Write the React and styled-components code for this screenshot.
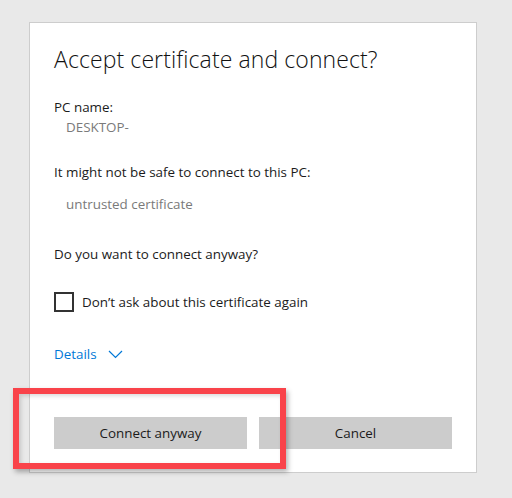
import React from "react";
import styled, { createGlobalStyle } from "styled-components";

const Global = createGlobalStyle`
  html, body { margin: 0; padding: 0; background: #e9e9e9; }
  body { font-family: "Open Sans", "Noto Sans", sans-serif; color: #1b1b1b; }
`;

const Page = styled.div`
  position: relative;
  width: 512px;
  height: 498px;
  padding: 22px 0 0 29px;
  box-sizing: border-box;
`;

const Card = styled.div`
  width: 448px;
  height: 451px;
  box-sizing: border-box;
  background: #fff;
  border: 1px solid #cdcdcd;
  padding: 20px 24px 23px 24px;
  display: flex;
  flex-direction: column;
`;

const Title = styled.h1`
  margin: 0;
  font-size: 23px;
  font-weight: 300;
  line-height: 32px;
  color: #111;
  letter-spacing: 0.1px;
`;

const Text = styled.div`
  font-size: 13.4px;
  line-height: 20px;
  margin-top: ${(p) => p.$mt || 0}px;
  color: #1b1b1b;
`;

const Muted = styled.div`
  font-size: 13.4px;
  line-height: 20px;
  margin-top: ${(p) => p.$mt || 0}px;
  padding-left: 12px;
  color: #7a7a7a;
`;

const CheckRow = styled.label`
  display: flex;
  align-items: center;
  gap: 8px;
  margin-top: 28px;
  font-size: 13.4px;
  line-height: 20px;
`;

const Box = styled.span`
  width: 20px;
  height: 20px;
  box-sizing: border-box;
  border: 2px solid #333;
  flex: none;
`;

const Details = styled.div`
  display: flex;
  align-items: center;
  gap: 11px;
  margin-top: 32px;
  font-size: 13.4px;
  line-height: 20px;
  color: #0078d7;
`;

const Buttons = styled.div`
  display: flex;
  gap: 12px;
  margin-top: auto;
`;

const Button = styled.button`
  width: 193px;
  height: 32px;
  border: none;
  background: #cccccc;
  font-family: inherit;
  font-size: 13.4px;
  color: #1b1b1b;
  padding: 0;
`;

const Highlight = styled.div`
  position: absolute;
  left: 13px;
  top: 388px;
  width: 273px;
  height: 81px;
  box-sizing: border-box;
  border: 6px solid #f9434a;
  box-shadow: 2px 3px 5px rgba(0, 0, 0, 0.3), inset 2px 2px 4px rgba(0, 0, 0, 0.15);
  pointer-events: none;
`;

export default function App() {
  return (
    <Page>
      <Global />
      <Card>
        <Title>Accept certificate and connect?</Title>
        <Text $mt={22}>PC name:</Text>
        <Muted>DESKTOP-</Muted>
        <Text $mt={25}>It might not be safe to connect to this PC:</Text>
        <Muted $mt={12}>untrusted certificate</Muted>
        <Text $mt={30}>Do you want to connect anyway?</Text>
        <CheckRow>
          <Box />
          Don’t ask about this certificate again
        </CheckRow>
        <Details>
          Details
          <svg width="15" height="9" viewBox="0 0 15 9">
            <path d="M1 1 L7.5 7.5 L14 1" fill="none" stroke="#0078d7" strokeWidth="1.2" />
          </svg>
        </Details>
        <Buttons>
          <Button>Connect anyway</Button>
          <Button>Cancel</Button>
        </Buttons>
      </Card>
      <Highlight />
    </Page>
  );
}
